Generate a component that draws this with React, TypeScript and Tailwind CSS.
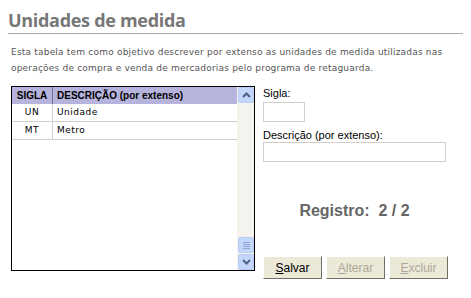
import React from "react";

type Unidade = { sigla: string; descricao: string };

const unidades: Unidade[] = [
  { sigla: "UN", descricao: "Unidade" },
  { sigla: "MT", descricao: "Metro" },
];

function ScrollButton({ dir }: { dir: "up" | "down" }) {
  return (
    <div className="flex h-[16px] w-[16px] items-center justify-center rounded-[2px] border border-[#b8cdf6] bg-[#c5d6fb]">
      <svg width="9" height="6" viewBox="0 0 9 6">
        <path
          d={dir === "up" ? "M1 5 L4.5 1.5 L8 5" : "M1 1 L4.5 4.5 L8 1"}
          fill="none"
          stroke="#4d6185"
          strokeWidth="2"
        />
      </svg>
    </div>
  );
}

function Scrollbar() {
  return (
    <div className="flex w-[17px] flex-col bg-[#f5f3ee] pl-px">
      <ScrollButton dir="up" />
      <div className="flex-1" />
      <div className="flex h-[16px] w-[16px] flex-col items-center justify-center gap-px rounded-[2px] border border-[#b8cdf6] bg-[#c5d6fb]">
        {[0, 1, 2, 3].map((i) => (
          <div key={i} className="h-px w-[7px] bg-[#8ea4d8]" />
        ))}
      </div>
      <div className="h-px" />
      <ScrollButton dir="down" />
    </div>
  );
}

function XpButton({
  label,
  disabled = false,
}: {
  label: string;
  disabled?: boolean;
}) {
  return (
    <button
      className={`h-[23px] w-[59px] border border-t-white border-l-white border-r-[#716f64] border-b-[#716f64] bg-[#ece9d8] text-[12px] ${
        disabled ? "text-[#aca899]" : "text-black"
      }`}
    >
      <span className="underline">{label[0]}</span>
      {label.slice(1)}
    </button>
  );
}

export default function App() {
  return (
    <div className="h-[298px] w-[471px] bg-white font-['DejaVu_Sans',sans-serif]">
      <div className="px-[8px] pt-[9px]">
        <h1 className="border-b border-[#a8a8a8] pb-[2px] font-['Open_Sans',sans-serif] text-[18px] font-bold leading-[22px] tracking-[-0.3px] text-[#777777]">
          Unidades de medida
        </h1>
      </div>

      <p className="px-[11px] pt-[10px] text-[9px] leading-[16px] tracking-[0.2px] text-[#555555]">
        Esta tabela tem como objetivo descrever por extenso as unidades de
        medida utilizadas nas operações de compra e venda de mercadorias pelo
        programa de retaguarda.
      </p>

      <div className="flex pl-[11px] pt-[10px]">
        <div className="flex h-[185px] w-[244px] border border-black">
          <div className="flex flex-1 flex-col">
            <div className="flex h-[17px] items-center bg-[#b6b4dc] font-['Liberation_Sans',sans-serif] text-[10px] font-bold text-black">
              <div className="flex h-full w-[41px] items-center justify-center border-r border-[#6f6d98]">
                SIGLA
              </div>
              <div className="pl-[4px]">DESCRIÇÃO (por extenso)</div>
            </div>
            {unidades.map((u) => (
              <div
                key={u.sigla}
                className="flex h-[18px] items-center border-b border-[#cfcfcf] text-[9px] tracking-[0.5px] text-black"
              >
                <div className="flex h-full w-[41px] items-center justify-center border-r border-[#cfcfcf]">
                  {u.sigla}
                </div>
                <div className="pl-[4px]">{u.descricao}</div>
              </div>
            ))}
          </div>
          <Scrollbar />
        </div>

        <div className="flex flex-1 flex-col pl-[8px] font-['Liberation_Sans',sans-serif] text-[11px] text-black">
          <label className="mt-[1px] leading-[13px]">Sigla:</label>
          <input className="mt-[2px] h-[20px] w-[42px] border border-[#d4d0c8] bg-white" />
          <label className="mt-[7px] leading-[13px]">
            Descrição (por extenso):
          </label>
          <input className="mt-0 h-[20px] w-[183px] border border-[#d4d0c8] bg-white" />

          <div className="mt-[37px] w-[183px] text-center text-[16px] font-bold text-[#666666]">
            Registro:&nbsp; 2 / 2
          </div>

          <div className="mt-[33px] flex gap-[4px]">
            <XpButton label="Salvar" />
            <XpButton label="Alterar" disabled />
            <XpButton label="Excluir" disabled />
          </div>
        </div>
      </div>
    </div>
  );
}
